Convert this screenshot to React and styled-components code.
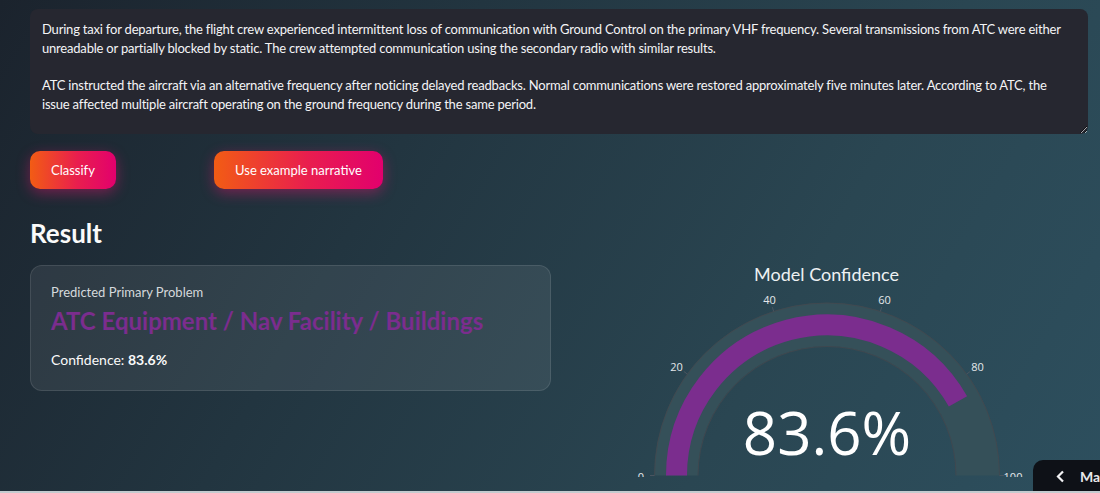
import React from 'react';
import styled, { createGlobalStyle } from 'styled-components';

const GlobalStyle = createGlobalStyle`
  html, body {
    margin: 0;
    padding: 0;
    height: 100%;
  }
  body {
    font-family: "Lato", "Noto Sans", sans-serif;
    color: #fafafa;
    background: #1f2c35;
    overflow: hidden;
  }
`;

const Page = styled.main`
  position: relative;
  height: 493px;
  box-sizing: border-box;
  padding: 9px 12px 0 30px;
  background: linear-gradient(120deg, #1b232d 0%, #223540 35%, #2a4652 70%, #2d4f5e 100%);
  overflow: hidden;
  border-bottom: 2px solid #c4cbcf;
`;

const Narrative = styled.textarea`
  display: block;
  width: 100%;
  height: 125px;
  box-sizing: border-box;
  padding: 11px 20px 11px 12px;
  border: none;
  border-radius: 8px;
  background: #262730;
  color: #f4f4f6;
  font-family: inherit;
  font-size: 13px;
  letter-spacing: -0.2px;
  line-height: 18.7px;
  resize: vertical;
  outline: none;
`;

const ButtonRow = styled.div`
  display: grid;
  grid-template-columns: 184px auto;
  justify-content: start;
  justify-items: start;
  margin-top: 17px;
`;

const Action = styled.button`
  height: 38px;
  padding: 0 21px;
  border: none;
  border-radius: 10px;
  background: linear-gradient(90deg, #f25c14 0%, #e91e4e 55%, #e2006d 100%);
  color: #fff;
  font-family: inherit;
  font-size: 13px;
  box-shadow: 0 4px 14px rgba(225, 20, 110, 0.45);
  cursor: pointer;
`;

const Heading = styled.h2`
  margin: 30px 0 18px;
  font-size: 26px;
  line-height: 28px;
  font-weight: 700;
`;

const Columns = styled.div`
  display: grid;
  grid-template-columns: 521px 1fr;
  gap: 14px;
  align-items: start;
`;

const Card = styled.section`
  box-sizing: border-box;
  height: 126px;
  padding: 18px 20px;
  border-radius: 12px;
  background: rgba(255, 255, 255, 0.075);
  border: 1px solid rgba(255, 255, 255, 0.1);
`;

const Label = styled.div`
  font-size: 13px;
  line-height: 16px;
  color: #d5d9dc;
`;

const Problem = styled.div`
  margin-top: 6px;
  font-size: 24px;
  line-height: 30px;
  font-weight: 700;
  color: #7b2d8e;
`;

const ConfidenceLine = styled.div`
  margin-top: 15px;
  font-size: 14px;
  line-height: 18px;
  b {
    font-weight: 700;
  }
`;

const GaugeBox = styled.section`
  display: flex;
  flex-direction: column;
  align-items: center;
  margin-top: -1px;
`;

const GaugeTitle = styled.div`
  font-size: 18px;
  line-height: 20px;
  color: #eef1f3;
`;

const DrawerTab = styled.div`
  position: absolute;
  right: 0;
  bottom: 0;
  width: 67px;
  height: 31px;
  box-sizing: border-box;
  display: flex;
  align-items: center;
  gap: 15px;
  padding: 2px 0 0 23px;
  background: #0e1117;
  border-radius: 10px 0 0 0;
  font-size: 14px;
  font-weight: 700;
  color: #e8e8ea;
  white-space: nowrap;
  overflow: hidden;

  svg {
    flex-shrink: 0;
  }
`;

const narrative = `During taxi for departure, the flight crew experienced intermittent loss of communication with Ground Control on the primary VHF frequency. Several transmissions from ATC were either unreadable or partially blocked by static. The crew attempted communication using the secondary radio with similar results.

ATC instructed the aircraft via an alternative frequency after noticing delayed readbacks. Normal communications were restored approximately five minutes later. According to ATC, the issue affected multiple aircraft operating on the ground frequency during the same period.`;

// half-circle gauge, value 0..100
const Gauge = ({ value }) => {
  const cx = 262;
  const cy = 191.5;
  const point = (r, v) => {
    const a = Math.PI - (v / 100) * Math.PI;
    return [cx + r * Math.cos(a), cy - r * Math.sin(a)];
  };
  const arc = (r, from, to) => {
    const [x1, y1] = point(r, from);
    const [x2, y2] = point(r, to);
    return `M ${x1} ${y1} A ${r} ${r} 0 0 1 ${x2} ${y2}`;
  };
  const ticks = [0, 20, 40, 60, 80, 100];

  return (
    <svg width="523" height="193" viewBox="0 0 523 193">
      <path d={arc(151, 0, 100)} fill="none" stroke="#355059" strokeWidth="43.5" />
      <path d={arc(172.5, 0, 100)} fill="none" stroke="#44474e" strokeWidth="0.8" />
      <path d={arc(129, 0, 100)} fill="none" stroke="#44474e" strokeWidth="0.8" />
      <path d={arc(150.5, 0, value)} fill="none" stroke="#7b2d8e" strokeWidth="21" />
      {ticks.map((t) => {
        const [x1, y1] = point(172.5, t);
        const [x2, y2] = point(177, t);
        const [tx, ty] = point(186, t);
        return (
          <g key={t}>
            <line x1={x1} y1={y1} x2={x2} y2={y2} stroke="#4a5560" strokeWidth="1" />
            <text
              x={tx}
              y={ty + 5}
              textAnchor="middle"
              fontSize="11"
              fill="#e4e7ea"
              fontFamily="'Open Sans', sans-serif"
            >
              {t}
            </text>
          </g>
        );
      })}
      <text
        x={cx}
        y={171}
        textAnchor="middle"
        fontSize="60"
        fill="#ffffff"
        fontFamily="'Open Sans', sans-serif"
      >
        {value}%
      </text>
    </svg>
  );
};

export default function App() {
  return (
    <>
      <GlobalStyle />
      <Page>
        <Narrative readOnly value={narrative} />
        <ButtonRow>
          <Action>Classify</Action>
          <Action>Use example narrative</Action>
        </ButtonRow>
        <Heading>Result</Heading>
        <Columns>
          <Card>
            <Label>Predicted Primary Problem</Label>
            <Problem>ATC Equipment / Nav Facility / Buildings</Problem>
            <ConfidenceLine>
              Confidence: <b>83.6%</b>
            </ConfidenceLine>
          </Card>
          <GaugeBox>
            <GaugeTitle>Model Confidence</GaugeTitle>
            <Gauge value={83.6} />
          </GaugeBox>
        </Columns>
        <DrawerTab>
          <svg width="9" height="13" viewBox="0 0 9 13">
            <path d="M7 1.5 L2 6.5 L7 11.5" fill="none" stroke="#f2f2f4" strokeWidth="2.2" />
          </svg>
          <span>Manage app</span>
        </DrawerTab>
      </Page>
    </>
  );
}
